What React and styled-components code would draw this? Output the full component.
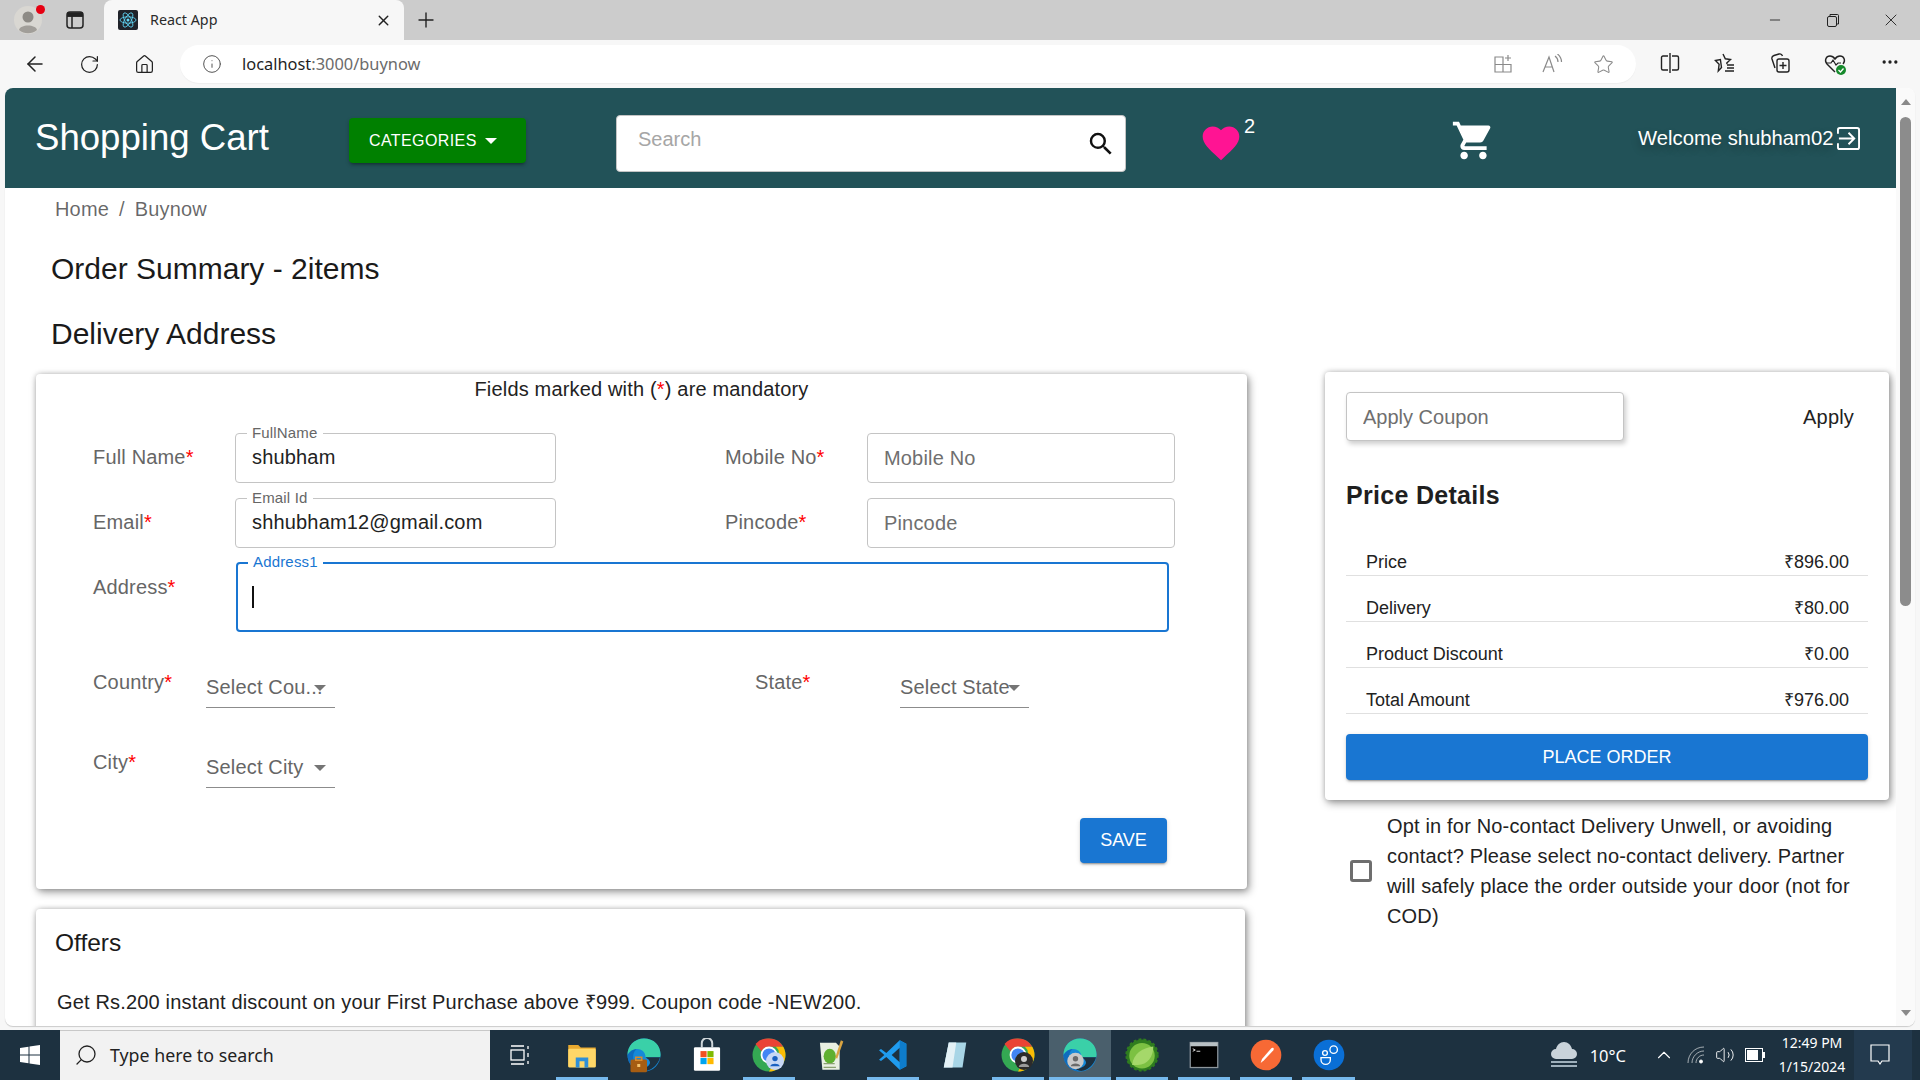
import React from 'react';
import styled, { createGlobalStyle } from 'styled-components';
import { ArrowLeft, RotateCw, Home, Info, Star, Plus, X, Minus, MoreHorizontal, ChevronUp, Volume2, Search } from 'lucide-react';
import { MdShoppingCart, MdFavorite, MdSearch } from 'react-icons/md';

const GlobalStyle = createGlobalStyle`
  html, body { margin: 0; padding: 0; height: 100%; overflow: hidden; }
  body { font-family: "Liberation Sans", Arial, sans-serif; letter-spacing: 0.17px; background: #f7f7f7; }
  * { box-sizing: border-box; }
`;

const Screen = styled.div`
  width: 1920px;
  height: 1080px;
  display: flex;
  flex-direction: column;
  overflow: hidden;
`;

/* browser chrome */
const TabStrip = styled.div`
  height: 40px;
  flex: none;
  background: #cccccc;
  display: flex;
  align-items: center;
  padding-left: 14px;
  letter-spacing: 0;
`;

const Avatar = styled.div`
  position: relative;
  width: 28px;
  height: 28px;
  flex: none;
  margin-right: 24px;
`;

const AvatarDot = styled.span`
  position: absolute;
  top: -1px;
  right: -3px;
  width: 9px;
  height: 9px;
  border-radius: 50%;
  background: #e60012;
`;

const TabActions = styled.div`
  width: 38px;
  flex: none;
  display: flex;
`;

const Tab = styled.div`
  width: 300px;
  height: 40px;
  flex: none;
  background: #f7f7f7;
  border-radius: 8px 8px 0 0;
  display: flex;
  align-items: center;
  padding: 0 12px 0 14px;
  font-family: "Noto Sans", sans-serif;
  font-size: 14.3px;
  color: #2b2b2b;
`;

const TabTitle = styled.span`
  margin: -2px 0 0 12px;
  flex: 1;
`;

const NewTab = styled.div`
  margin-left: 10px;
  display: flex;
  color: #222;
`;

const WindowButtons = styled.div`
  margin-left: auto;
  display: flex;
  align-items: center;
  color: #222;
`;

const WindowButton = styled.div`
  width: 58px;
  display: flex;
  justify-content: center;
`;

const Toolbar = styled.div`
  height: 48px;
  flex: none;
  background: #f7f7f7;
  display: flex;
  align-items: center;
  padding-left: 7px;
  letter-spacing: 0;
`;

const NavButton = styled.div`
  width: 55px;
  display: flex;
  justify-content: center;
  flex: none;
  color: #222;
`;

const AddressBar = styled.div`
  width: 1456px;
  height: 38px;
  margin-left: 8px;
  flex: none;
  background: #fff;
  border-radius: 19px;
  display: flex;
  align-items: center;
  padding: 0 8px 0 22px;
  box-shadow: 0 1px 1px rgba(0, 0, 0, 0.04);
`;

const Url = styled.div`
  margin: -2px 0 0 20px;
  font-family: "Noto Sans", sans-serif;
  font-size: 16.4px;
  color: #6b6b6b;
  flex: 1;
`;

const UrlHost = styled.span`
  color: #1f1f1f;
`;

const BarIcon = styled.div`
  width: 50px;
  display: flex;
  justify-content: center;
  color: #8a8a8a;
`;

const ToolIcons = styled.div`
  display: flex;
  margin-left: 6px;
`;

/* page viewport */
const Viewport = styled.div`
  flex: 1;
  min-height: 0;
  margin: 0 5px 4px 5px;
  background: #fff;
  border-radius: 8px;
  display: flex;
  overflow: hidden;
  box-shadow: 0 1px 1px rgba(0, 0, 0, 0.18);
`;

const Page = styled.div`
  flex: 1;
  min-width: 0;
  overflow: hidden;
`;

const Scrollbar = styled.div`
  width: 19px;
  flex: none;
  background: #fafafa;
  display: flex;
  flex-direction: column;
  align-items: center;
  padding: 11px 0 10px;
`;

const ScrollArrow = styled.div`
  width: 0;
  height: 0;
  border-left: 5px solid transparent;
  border-right: 5px solid transparent;
  ${(p) => (p.$down ? 'border-top: 6px solid #8a8a8a;' : 'border-bottom: 6px solid #8a8a8a;')}
`;

const ScrollThumb = styled.div`
  width: 11px;
  height: 489px;
  margin-top: 12px;
  background: #8c8c8c;
  border-radius: 6px;
`;

const ScrollGap = styled.div`
  flex: 1;
`;

/* shop header */
const Header = styled.header`
  height: 100px;
  background: #225258;
  display: flex;
  align-items: center;
  padding-left: 30px;
  color: #fff;
`;

const Brand = styled.div`
  width: 314px;
  flex: none;
  font-size: 36.6px;
  letter-spacing: 0;
`;

const CategoryButton = styled.button`
  width: 177px;
  height: 45px;
  margin-top: 5px;
  flex: none;
  border: 0;
  border-radius: 4px;
  background: #008000;
  color: #fff;
  font-family: inherit;
  font-size: 16px;
  letter-spacing: 0.4px;
  display: flex;
  align-items: center;
  padding-left: 20px;
  gap: 8px;
  box-shadow: 0 3px 3px -2px rgba(0, 0, 0, 0.3), 0 2px 4px rgba(0, 0, 0, 0.2);
`;

const DropTriangle = styled.span`
  width: 0;
  height: 0;
  border-left: 6px solid transparent;
  border-right: 6px solid transparent;
  border-top: 6px solid currentColor;
`;

const SearchBox = styled.div`
  width: 510px;
  height: 57px;
  margin: 11px 0 0 90px;
  flex: none;
  background: #fff;
  border: 1px solid #c4c4c4;
  border-radius: 4px;
  display: flex;
  align-items: center;
  padding: 0 9px 8px 21px;
  color: #111;
`;

const SearchInput = styled.input`
  flex: 1;
  min-width: 0;
  border: 0;
  outline: 0;
  font-family: inherit;
  font-size: 20px;
  padding: 0;
  &::placeholder { color: #a6a6a6; opacity: 1; }
`;

const SearchIconWrap = styled.div`
  display: flex;
  margin-top: 8px;
`;

const Wishlist = styled.div`
  position: relative;
  margin: 10px 0 0 71px;
  width: 48px;
  height: 48px;
  flex: none;
  color: #ff1493;
  display: flex;
  align-items: center;
  justify-content: center;
`;

const WishCount = styled.span`
  position: absolute;
  top: -4px;
  left: 47px;
  font-size: 20px;
  color: #fff;
`;

const CartLink = styled.div`
  margin: 4px 0 0 202px;
  width: 52px;
  flex: none;
  display: flex;
  justify-content: center;
`;

const Welcome = styled.div`
  margin-left: 139px;
  margin-top: 1px;
  font-size: 20.25px;
  letter-spacing: 0;
  display: flex;
  align-items: center;
  gap: 4px;
  white-space: nowrap;
  text-shadow: 0 4px 8px rgba(0, 0, 0, 0.3);
`;

/* body of the page */
const Crumbs = styled.nav`
  padding: 10px 0 0 50px;
  font-size: 20px;
  line-height: 23px;
  color: rgba(0, 0, 0, 0.6);
`;

const CrumbSep = styled.span`
  margin: 0 10px;
`;

const PageTitle = styled.h1`
  margin: ${(p) => p.$top}px 0 0 46px;
  font-size: 30px;
  font-weight: 400;
  line-height: 36px;
  letter-spacing: 0;
  color: #1a1a1a;
`;

const Columns = styled.div`
  display: flex;
  align-items: flex-start;
  gap: 78px;
  padding: 20px 0 0 31px;
`;

const LeftColumn = styled.div`
  width: 1211px;
  flex: none;
  margin-top: 2px;
`;

const RightColumn = styled.div`
  width: 564px;
  flex: none;
`;

const Card = styled.section`
  background: #fff;
  border-radius: 4px;
  box-shadow: 2px 3px 8px rgba(0, 0, 0, 0.4), 0 0 5px rgba(0, 0, 0, 0.18);
`;

const FormCard = styled(Card)`
  height: 515px;
  padding: 0 0 0 57px;
`;

const Note = styled.div`
  height: 28px;
  margin-left: -57px;
  text-align: center;
  font-size: 20px;
  line-height: 30px;
  color: #222;
`;

const Req = styled.span`
  color: #f00;
`;

const FieldRow = styled.div`
  display: flex;
  margin-top: ${(p) => p.$top}px;
`;

const FieldPair = styled.div`
  display: flex;
  align-items: center;
  flex: none;
  width: ${(p) => p.$width}px;
`;

const FieldLabel = styled.label`
  flex: none;
  width: 142px;
  margin-top: -2px;
  font-size: 20px;
  color: #666;
  white-space: nowrap;
`;

const Outlined = styled.div`
  position: relative;
  flex: none;
  width: ${(p) => p.$width}px;
  height: 50px;
`;

const TextInput = styled.input`
  width: 100%;
  height: 100%;
  border: 1px solid #c4c4c4;
  border-radius: 4px;
  outline: 0;
  background: #fff;
  padding: 0 16px 2px;
  font-family: inherit;
  font-size: 20px;
  letter-spacing: 0.17px;
  color: #222;
  &::placeholder { color: #6f6f6f; opacity: 1; }
  &:not([value]) { padding-bottom: 0; }
`;

const FloatLabel = styled.span`
  position: absolute;
  top: ${(p) => (p.$focused ? -11 : -9)}px;
  left: ${(p) => (p.$focused ? 10 : 12)}px;
  padding: 0 5px;
  background: #fff;
  font-size: 15px;
  line-height: 17px;
  color: ${(p) => (p.$focused ? '#1976d2' : '#666')};
`;

const AddressLabel = styled(FieldLabel)`
  align-self: flex-start;
  margin-top: 14px;
`;

const FocusedField = styled.div`
  position: relative;
  width: 933px;
  height: 70px;
  margin-left: 1px;
  flex: none;
  border: 2px solid #1976d2;
  border-radius: 4px;
  display: flex;
  align-items: center;
  padding: 0 14px;
`;

const Caret = styled.span`
  width: 2px;
  height: 22px;
  background: #111;
`;

const SelectRow = styled.div`
  display: flex;
  margin-top: ${(p) => p.$top}px;
  height: 38px;
`;

const SelectLabel = styled.div`
  flex: none;
  width: ${(p) => p.$width}px;
  font-size: 20px;
  line-height: 23px;
  margin-top: 1px;
  color: #666;
`;

const SelectBox = styled.div`
  position: relative;
  flex: none;
  width: 129px;
  height: 38px;
  border-bottom: 1px solid #8c8c8c;
  padding-top: 6px;
  font-size: 20px;
  line-height: 23px;
  color: #666;
  white-space: nowrap;
`;

const SelectArrow = styled.span`
  position: absolute;
  top: 15px;
  right: 9px;
  width: 0;
  height: 0;
  border-left: 6px solid transparent;
  border-right: 6px solid transparent;
  border-top: 6px solid #757575;
`;

const SelectSpacer = styled.div`
  flex: none;
  width: 420px;
`;

const SaveRow = styled.div`
  display: flex;
  justify-content: flex-end;
  margin-top: 30px;
  padding-right: 80px;
`;

const BlueButton = styled.button`
  height: ${(p) => p.$height}px;
  width: ${(p) => p.$width};
  border: 0;
  border-radius: 4px;
  background: #1976d2;
  color: #fff;
  font-family: inherit;
  font-size: 18px;
  box-shadow: 0 3px 1px -2px rgba(0, 0, 0, 0.2), 0 2px 2px rgba(0, 0, 0, 0.14), 0 1px 5px rgba(0, 0, 0, 0.12);
`;

const OffersCard = styled(Card)`
  margin-top: 20px;
  width: 1209px;
  height: 220px;
  padding: 19px 19px;
`;

const OffersTitle = styled.h2`
  margin: 0;
  font-size: 24.5px;
  font-weight: 400;
  line-height: 30px;
  letter-spacing: 0;
  color: #1a1a1a;
`;

const OffersText = styled.p`
  margin: 32px 0 0 2px;
  font-size: 20px;
  line-height: 24px;
  color: #222;
`;

const PriceCard = styled(Card)`
  height: 428px;
  padding: 20px 21px;
`;

const CouponRow = styled.div`
  display: flex;
  align-items: center;
  justify-content: space-between;
  padding-right: 14px;
`;

const CouponInput = styled.input`
  width: 278px;
  height: 49px;
  border: 1px solid #c4c4c4;
  border-radius: 4px;
  outline: 0;
  padding: 2px 16px 0;
  font-family: inherit;
  font-size: 20px;
  box-shadow: 2px 3px 5px rgba(0, 0, 0, 0.2);
  &::placeholder { color: #6f6f6f; opacity: 1; }
`;

const ApplyText = styled.span`
  margin-top: 2px;
  font-size: 20px;
  color: #222;
`;

const PriceHeading = styled.h3`
  margin: 40px 0 21px;
  font-size: 25px;
  font-weight: 700;
  line-height: 28px;
  letter-spacing: 0.3px;
  color: #1f1f1f;
`;

const PriceRow = styled.div`
  height: 46px;
  display: flex;
  align-items: flex-end;
  justify-content: space-between;
  padding: 0 19px 2px 20px;
  border-bottom: 1px solid #e0e0e0;
  font-size: 18px;
  line-height: 21px;
  letter-spacing: -0.02px;
  color: #222;
`;

const PlaceOrderWrap = styled.div`
  margin-top: 20px;
`;

const OptIn = styled.div`
  display: flex;
  align-items: center;
  gap: 15px;
  margin-top: 11px;
  padding-left: 25px;
`;

const CheckSquare = styled.span`
  width: 22px;
  height: 22px;
  flex: none;
  border: 3px solid #6e6e6e;
  border-radius: 3px;
`;

const OptText = styled.p`
  margin: 0;
  width: 475px;
  font-size: 20px;
  line-height: 30px;
  color: #222;
`;

/* windows taskbar */
const Taskbar = styled.footer`
  height: 50px;
  flex: none;
  background: #1d3140;
  display: flex;
  align-items: stretch;
  color: #fff;
  letter-spacing: 0;
`;

const StartButton = styled.div`
  width: 60px;
  flex: none;
  display: flex;
  align-items: center;
  justify-content: center;
`;

const TaskSearch = styled.div`
  width: 430px;
  flex: none;
  background: #f2f2f2;
  border-top: 1px solid #c8c8c8;
  display: flex;
  align-items: center;
  gap: 12px;
  padding: 0 0 2px 14px;
  font-family: "Noto Sans", sans-serif;
  font-size: 17.8px;
  color: #222;
`;

const MirroredSearch = styled(Search)`
  transform: scaleX(-1);
`;

const TaskIcons = styled.div`
  display: flex;
  margin-left: -1px;
`;

const TaskIcon = styled.div`
  position: relative;
  width: 62.2px;
  flex: none;
  display: flex;
  align-items: center;
  justify-content: center;
  background: ${(p) => (p.$active ? '#4a5f6c' : 'transparent')};
  ${(p) => p.$open && `
    &::after {
      content: "";
      position: absolute;
      left: ${p.$active ? 0 : 5}px;
      right: ${p.$active ? 0 : 5}px;
      bottom: 0;
      height: 3px;
      background: #76b9ed;
    }
  `}
`;

const Tray = styled.div`
  margin-left: auto;
  display: flex;
  align-items: center;
`;

const TrayItem = styled.div`
  width: ${(p) => p.$width}px;
  display: flex;
  align-items: center;
  justify-content: center;
`;

const Temperature = styled.span`
  font-family: "Noto Sans", sans-serif;
  font-size: 16.5px;
  margin: 0 20px 0 11px;
`;

const Clock = styled.div`
  width: 84px;
  text-align: center;
  font-family: "Noto Sans", sans-serif;
  font-size: 14px;
  line-height: 24px;
`;

const NotifyButton = styled.div`
  width: 58px;
  height: 50px;
  margin-right: 8px;
  padding-right: 6px;
  background: #233a4e;
  display: flex;
  align-items: center;
  justify-content: center;
`;

const ChromeLogo = ({ badge }) => (
  <svg width="36" height="36" viewBox="0 0 24 24">
    <circle cx="12" cy="12" r="11" fill="#34a853" />
    <path d="M12 1a11 11 0 0 1 9.500 5.500H12a5.500 5.500 0 0 0-5 3L3 4.600A11 11 0 0 1 12 1z" fill="#ea4335" />
    <path d="M21.500 6.500A11 11 0 0 1 12 23l4.600-8a5.500 5.500 0 0 0 0-8.500z" fill="#fbbc05" />
    <circle cx="12" cy="12" r="5.600" fill="#fff" />
    <circle cx="12" cy="12" r="4.400" fill="#4285f4" />
    {badge === 'user' && (
      <g>
        <circle cx="16" cy="16" r="6" fill="#c7d7f5" />
        <circle cx="16" cy="14.400" r="1.800" fill="#1a5fc0" />
        <path d="M12.800 19.500c.4-2.200 6-2.200 6.400 0z" fill="#1a5fc0" />
      </g>
    )}
    {badge === 'photo' && (
      <g>
        <circle cx="16" cy="16" r="6" fill="#2b2b2b" />
        <circle cx="16" cy="14.600" r="2" fill="#cfcfcf" />
        <path d="M12.500 20c.4-2.800 6.600-2.800 7 0z" fill="#9a9a9a" />
      </g>
    )}
  </svg>
);

const EdgeLogo = ({ badge }) => (
  <svg width="36" height="36" viewBox="0 0 24 24">
    <circle cx="12" cy="12" r="11" fill="#1689d8" />
    <path d="M1 12C1 5.500 6 1 12 1c6.500 0 11 4.500 11 10.500 0 1-.1 1.500-.3 2H13c0-3-2-5.500-5.500-5.500C5 8 2.500 9.500 1 12z" fill="#3ad0a8" />
    <path d="M13 13.500h9.700C21.600 18 18 21.500 14 22.500c-2 .3-4-.2-5-1.500 3 .5 7-1.500 7-4 0-1.500-1.500-2.500-3-3.500z" fill="#1d3140" />
    <path d="M12 23C6 23 1 18 1 12c1.500-2.500 4-4 6-4-2 2-2.500 4-2 7 .6 3.800 4 7.500 7 8z" fill="#0f6cbd" />
    {badge === 'case' && (
      <g>
        <rect x="3" y="15" width="11" height="8.500" rx="1" fill="#a65d12" />
        <rect x="6.500" y="13.500" width="4" height="2" fill="none" stroke="#d98a2b" />
        <rect x="7.500" y="18" width="2" height="2" fill="#f5c26b" />
      </g>
    )}
    {badge === 'user' && (
      <g>
        <circle cx="9" cy="16" r="5.500" fill="#c9c9c9" />
        <circle cx="9" cy="14.500" r="1.800" fill="#6a6a6a" />
        <path d="M5.800 19.500c.4-2.400 6-2.400 6.400 0z" fill="#6a6a6a" />
      </g>
    )}
  </svg>
);

const TaskViewIcon = () => (
  <svg width="24" height="24" viewBox="0 0 24 24" fill="none" stroke="#fff" strokeWidth="1.300">
    <rect x="3" y="7" width="13" height="10" />
    <path d="M3 3h13M3 21h13M20 3v3M20 10v4M20 18v3" />
  </svg>
);

const ExplorerIcon = () => (
  <svg width="30" height="30" viewBox="0 0 24 24">
    <path d="M1 4h8l2 2h12v15H1z" fill="#e8a92f" />
    <rect x="1" y="7" width="22" height="15" rx="1" fill="#ffd768" />
    <rect x="7" y="14" width="10" height="8" fill="#2f8fd8" />
    <rect x="10" y="17" width="4" height="5" fill="#ffd768" />
  </svg>
);

const StoreIcon = () => (
  <svg width="32" height="34" viewBox="0 0 24 26">
    <path d="M8 7V4a4 4 0 0 1 8 0v3" fill="none" stroke="#cfd6da" strokeWidth="1.500" />
    <rect x="2" y="7" width="20" height="18" rx="1" fill="#fff" />
    <rect x="7" y="10" width="4.700" height="4.700" fill="#f25022" />
    <rect x="12.300" y="10" width="4.700" height="4.700" fill="#7fba00" />
    <rect x="7" y="15.300" width="4.700" height="4.700" fill="#00a4ef" />
    <rect x="12.300" y="15.300" width="4.700" height="4.700" fill="#ffb900" />
  </svg>
);

const NotepadIcon = () => (
  <svg width="30" height="32" viewBox="0 0 24 26">
    <path d="M3 3h13l3 3v19H5z" fill="#e9efe1" />
    <ellipse cx="11" cy="14" rx="5" ry="6" fill="#5fb030" />
    <path d="M6 20h9M6 23h10" stroke="#8aa070" />
    <path d="M20 1l2 1-5 14-1.500-1z" fill="#d9a441" />
  </svg>
);

const VscodeIcon = () => (
  <svg width="32" height="32" viewBox="0 0 24 24">
    <path d="M17 1l5 2.500v17L17 23 7 13.500 3 16.500 1.500 15.500 5.500 12l-4-3.500L3 7.500l4 3z" fill="#1f9cf0" />
    <path d="M17 6.500 11 12l6 5.500z" fill="#1d3140" />
    <path d="M17 1l5 2.500v17L17 23z" fill="#0e7ccb" />
  </svg>
);

const NotebookIcon = () => (
  <svg width="30" height="30" viewBox="0 0 24 24">
    <path d="M7 2h14l-3 20H3z" fill="#a8d5e6" />
    <path d="M7 2h6l-3 20H3z" fill="#e4f1f6" />
  </svg>
);

const SpringIcon = () => (
  <svg width="34" height="34" viewBox="0 0 24 24">
    <circle cx="12" cy="12" r="11" fill="#2f7d1f" strokeDasharray="2 1.500" stroke="#2f7d1f" strokeWidth="1.500" />
    <circle cx="12" cy="12.500" r="9" fill="#7cc142" />
    <path d="M5 19C6 11 12 7 20 6c0 7-4 13-11 13-1 0-2 .3-4 0z" fill="#a5d86a" />
  </svg>
);

const TerminalIcon = () => (
  <svg width="30" height="30" viewBox="0 0 24 24">
    <rect x="1" y="2" width="22" height="20" fill="#000" stroke="#8d969c" />
    <rect x="1" y="2" width="22" height="3" fill="#b8c0c4" />
    <path d="M3 7l2 1-2 1M6 9h3" stroke="#d8d8d8" strokeWidth=".8" fill="none" />
  </svg>
);

const PostmanIcon = () => (
  <svg width="32" height="32" viewBox="0 0 24 24">
    <circle cx="12" cy="12" r="11.500" fill="#f76935" />
    <path d="M8 18l1-3 7-8c1-1 2.500 0 1.500 1.500L10.500 16z" fill="#fff" />
  </svg>
);

const DbIcon = () => (
  <svg width="32" height="32" viewBox="0 0 24 24">
    <circle cx="12" cy="12" r="11.500" fill="#0a6fd6" />
    <circle cx="15.500" cy="8" r="2.800" fill="none" stroke="#fff" />
    <circle cx="9" cy="10.500" r="1.800" fill="none" stroke="#fff" />
    <path d="M6 14h7v1.500a3.500 3.500 0 0 1-7 0z" fill="none" stroke="#fff" />
  </svg>
);

const WindowsLogo = () => (
  <svg width="20" height="20" viewBox="0 0 20 20" fill="#fff">
    <path d="M0 3l8.500-1.200v7.700H0zM9.500 1.600 20 0v9.500H9.500zM0 10.500h8.500v7.700L0 17zM9.500 10.500H20V20L9.500 18.400z" />
  </svg>
);

const ReactFavicon = () => (
  <svg width="20" height="20" viewBox="0 0 20 20">
    <rect width="20" height="20" rx="2" fill="#20232a" />
    <g fill="none" stroke="#61dafb" strokeWidth=".8">
      <ellipse cx="10" cy="10" rx="8" ry="3.200" />
      <ellipse cx="10" cy="10" rx="8" ry="3.200" transform="rotate(60 10 10)" />
      <ellipse cx="10" cy="10" rx="8" ry="3.200" transform="rotate(120 10 10)" />
    </g>
    <circle cx="10" cy="10" r="1.500" fill="#61dafb" />
  </svg>
);

const ProfileIcon = () => (
  <svg width="28" height="28" viewBox="0 0 28 28">
    <circle cx="14" cy="14" r="14" fill="#d9d7d2" />
    <circle cx="14" cy="11" r="5.500" fill="#8d8a85" />
    <path d="M5 24c1-6 17-6 18 0a14 14 0 0 1-18 0z" fill="#a19e99" />
  </svg>
);

const TabsIcon = () => (
  <svg width="18" height="18" viewBox="0 0 18 18" fill="none" stroke="#222" strokeWidth="1.500">
    <rect x="1" y="1" width="16" height="16" rx="3" />
    <path d="M1 5h16M6 5v12" />
    <path d="M2 2h14v3H2z" fill="#222" />
  </svg>
);

const AddAppIcon = () => (
  <svg width="20" height="20" viewBox="0 0 20 20" fill="none" stroke="#8a8a8a" strokeWidth="1.200">
    <path d="M2 3h8v15H2zM10 3v15M2 10.500h16V18h-8M15 1v6M12 4h6" />
  </svg>
);

const ReadAloudIcon = () => (
  <svg width="22" height="20" viewBox="0 0 22 20" fill="none" stroke="#8a8a8a" strokeWidth="1.200">
    <path d="M1 18 7 3l5 15M3 13h7M13 2c2 1.500 3 3.500 3 6M15.500 0c2.500 2 4 4.500 4 8" />
  </svg>
);

const SplitIcon = () => (
  <svg width="20" height="22" viewBox="0 0 20 22" fill="none" stroke="#222" strokeWidth="1.400">
    <path d="M8 4H3a1.500 1.500 0 0 0-1.500 1.500v11A1.500 1.500 0 0 0 3 18h5M12 4h5a1.500 1.500 0 0 1 1.500 1.500v11A1.500 1.500 0 0 1 17 18h-5M10 1v20" />
  </svg>
);

const FavListIcon = () => (
  <svg width="22" height="22" viewBox="0 0 22 22" fill="none" stroke="#222" strokeWidth="1.400">
    <path d="M9 2l2.300 4.800 5.200.7-3.700 3.600.2 1M7.500 15.500 4.300 19l.8-6.700L1.400 8.500l5-1z" />
    <path d="M13 13h7M13 16h7M11 19h9" />
  </svg>
);

const CollectionsIcon = () => (
  <svg width="22" height="22" viewBox="0 0 22 22" fill="none" stroke="#222" strokeWidth="1.400">
    <path d="M6 16 3 7c-.4-1.500.5-3 2-3.500L10 2c1.500-.4 3 .4 3.500 2" />
    <rect x="8" y="7" width="12" height="13" rx="2" />
    <path d="M14 10v7M10.500 13.500h7" />
  </svg>
);

const HealthIcon = () => (
  <svg width="24" height="24" viewBox="0 0 24 24">
    <path d="M12 20 4 12C1 8.500 3 4 7 4c2.500 0 4 1.500 5 3 1-1.500 2.500-3 5-3 4 0 6 4.500 3 8" fill="none" stroke="#222" strokeWidth="1.400" />
    <path d="M4 11h4l2-3 3 5 2-2h3" fill="none" stroke="#222" strokeWidth="1.200" />
    <circle cx="18" cy="18" r="5" fill="#168a2c" />
    <path d="M15.500 18l2 2 3-3.500" fill="none" stroke="#fff" strokeWidth="1.300" />
  </svg>
);

const ExitIcon = () => (
  <svg width="23" height="23" viewBox="0 0 24 24" fill="none" stroke="#fff" strokeWidth="2">
    <path d="M1 7V3a2 2 0 0 1 2-2h18a2 2 0 0 1 2 2v18a2 2 0 0 1-2 2H3a2 2 0 0 1-2-2v-4" />
    <path d="M2 12h15M12 6l6 6-6 6" />
  </svg>
);

const CloudIcon = () => (
  <svg width="30" height="30" viewBox="0 0 30 30">
    <path d="M7 19a5 5 0 0 1 0-10c1-4 4-7 8-7s7 3 8 7a5 5 0 0 1 0 10z" fill="#c9d3da" />
    <path d="M2 22h26M2 26h26" stroke="#9eb0bc" strokeWidth="2" />
  </svg>
);

const WifiIcon = () => (
  <svg width="20" height="20" viewBox="0 0 20 20" fill="none" stroke="#fff">
    <path d="M2 18C2 9 9 2 18 2M6 18c0-6.500 5.500-12 12-12M10 18c0-4.500 3.500-8 8-8" opacity=".6" />
    <circle cx="15" cy="16.500" r="1.500" fill="#fff" />
  </svg>
);

const BatteryIcon = () => (
  <svg width="20" height="14" viewBox="0 0 20 14">
    <rect x=".5" y=".5" width="17" height="13" fill="none" stroke="#fff" />
    <rect x="2" y="2" width="11" height="10" fill="#fff" />
    <rect x="18" y="4" width="2" height="6" fill="#fff" />
  </svg>
);

const NotifyIcon = () => (
  <svg width="20" height="22" viewBox="0 0 20 22" fill="none" stroke="#fff" strokeWidth="1.200">
    <path d="M1 1h18v16h-7l-2 3-2-3H1z" />
  </svg>
);

const priceRows = [
  ['Price', '₹896.00'],
  ['Delivery', '₹80.00'],
  ['Product Discount', '₹0.00'],
  ['Total Amount', '₹976.00'],
];

const taskApps = [
  { key: 'view', node: <TaskViewIcon /> },
  { key: 'files', node: <ExplorerIcon />, open: true },
  { key: 'edge-work', node: <EdgeLogo badge="case" /> },
  { key: 'store', node: <StoreIcon /> },
  { key: 'chrome', node: <ChromeLogo badge="user" />, open: true },
  { key: 'notepad', node: <NotepadIcon /> },
  { key: 'code', node: <VscodeIcon />, open: true },
  { key: 'notebook', node: <NotebookIcon /> },
  { key: 'chrome-2', node: <ChromeLogo badge="photo" />, open: true },
  { key: 'edge', node: <EdgeLogo badge="user" />, open: true, active: true },
  { key: 'spring', node: <SpringIcon />, open: true },
  { key: 'terminal', node: <TerminalIcon />, open: true },
  { key: 'postman', node: <PostmanIcon />, open: true },
  { key: 'db', node: <DbIcon />, open: true },
];

const Required = () => <Req>*</Req>;

const App = () => (
  <Screen>
    <GlobalStyle />
    <TabStrip>
      <Avatar>
        <ProfileIcon />
        <AvatarDot />
      </Avatar>
      <TabActions><TabsIcon /></TabActions>
      <Tab>
        <ReactFavicon />
        <TabTitle>React App</TabTitle>
        <X size={17} color="#222" />
      </Tab>
      <NewTab><Plus size={24} strokeWidth={1.4} /></NewTab>
      <WindowButtons>
        <WindowButton><Minus size={16} strokeWidth={1.3} /></WindowButton>
        <WindowButton>
          <svg width="14" height="14" viewBox="0 0 14 14" fill="none" stroke="#222">
            <rect x="1.500" y="3.500" width="9" height="10" rx="1.500" />
            <path d="M4 3V1.500h7.500a1 1 0 0 1 1 1V11H11" />
          </svg>
        </WindowButton>
        <WindowButton><X size={20} strokeWidth={1.1} /></WindowButton>
      </WindowButtons>
    </TabStrip>

    <Toolbar>
      <NavButton><ArrowLeft size={24} strokeWidth={1.5} /></NavButton>
      <NavButton><RotateCw size={21} strokeWidth={1.4} /></NavButton>
      <NavButton><Home size={21} strokeWidth={1.4} /></NavButton>
      <AddressBar>
        <Info size={20} strokeWidth={1.2} color="#555" />
        <Url><UrlHost>localhost</UrlHost>:3000/buynow</Url>
        <BarIcon><AddAppIcon /></BarIcon>
        <BarIcon><ReadAloudIcon /></BarIcon>
        <BarIcon><Star size={21} strokeWidth={1.2} /></BarIcon>
      </AddressBar>
      <ToolIcons>
        <NavButton><SplitIcon /></NavButton>
        <NavButton><FavListIcon /></NavButton>
        <NavButton><CollectionsIcon /></NavButton>
        <NavButton><HealthIcon /></NavButton>
        <NavButton><MoreHorizontal size={20} /></NavButton>
      </ToolIcons>
    </Toolbar>

    <Viewport>
      <Page>
        <Header>
          <Brand>Shopping Cart</Brand>
          <CategoryButton>CATEGORIES<DropTriangle /></CategoryButton>
          <SearchBox>
            <SearchInput placeholder="Search" readOnly />
            <SearchIconWrap><MdSearch size={30} /></SearchIconWrap>
          </SearchBox>
          <Wishlist>
            <MdFavorite size={44} />
            <WishCount>2</WishCount>
          </Wishlist>
          <CartLink><MdShoppingCart size={45} /></CartLink>
          <Welcome>Welcome shubham02<ExitIcon /></Welcome>
        </Header>

        <Crumbs>Home<CrumbSep>/</CrumbSep>Buynow</Crumbs>
        <PageTitle $top={30}>Order Summary - 2items</PageTitle>
        <PageTitle $top={29}>Delivery Address</PageTitle>

        <Columns>
          <LeftColumn>
            <FormCard>
              <Note>Fields marked with (<Required />) are mandatory</Note>
              <FieldRow $top={31}>
                <FieldPair $width={632}>
                  <FieldLabel>Full Name<Required /></FieldLabel>
                  <Outlined $width={321}>
                    <TextInput value="shubham" readOnly />
                    <FloatLabel>FullName</FloatLabel>
                  </Outlined>
                </FieldPair>
                <FieldPair $width={450}>
                  <FieldLabel>Mobile No<Required /></FieldLabel>
                  <Outlined $width={308}>
                    <TextInput placeholder="Mobile No" readOnly />
                  </Outlined>
                </FieldPair>
              </FieldRow>
              <FieldRow $top={15}>
                <FieldPair $width={632}>
                  <FieldLabel>Email<Required /></FieldLabel>
                  <Outlined $width={321}>
                    <TextInput value="shhubham12@gmail.com" readOnly />
                    <FloatLabel>Email Id</FloatLabel>
                  </Outlined>
                </FieldPair>
                <FieldPair $width={450}>
                  <FieldLabel>Pincode<Required /></FieldLabel>
                  <Outlined $width={308}>
                    <TextInput placeholder="Pincode" readOnly />
                  </Outlined>
                </FieldPair>
              </FieldRow>
              <FieldRow $top={14}>
                <AddressLabel>Address<Required /></AddressLabel>
                <FocusedField>
                  <Caret />
                  <FloatLabel $focused>Address1</FloatLabel>
                </FocusedField>
              </FieldRow>
              <SelectRow $top={38}>
                <SelectLabel $width={113}>Country<Required /></SelectLabel>
                <SelectBox>
                  Select Cou...
                  <SelectArrow />
                </SelectBox>
                <SelectSpacer />
                <SelectLabel $width={145}>State<Required /></SelectLabel>
                <SelectBox>
                  Select State
                  <SelectArrow />
                </SelectBox>
              </SelectRow>
              <SelectRow $top={42}>
                <SelectLabel $width={113}>City<Required /></SelectLabel>
                <SelectBox>
                  Select City
                  <SelectArrow />
                </SelectBox>
              </SelectRow>
              <SaveRow>
                <BlueButton $height={45} $width="87px">SAVE</BlueButton>
              </SaveRow>
            </FormCard>

            <OffersCard>
              <OffersTitle>Offers</OffersTitle>
              <OffersText>Get Rs.200 instant discount on your First Purchase above ₹999. Coupon code -NEW200.</OffersText>
            </OffersCard>
          </LeftColumn>

          <RightColumn>
            <PriceCard>
              <CouponRow>
                <CouponInput placeholder="Apply Coupon" readOnly />
                <ApplyText>Apply</ApplyText>
              </CouponRow>
              <PriceHeading>Price Details</PriceHeading>
              {priceRows.map(([name, amount]) => (
                <PriceRow key={name}>
                  <span>{name}</span>
                  <span>{amount}</span>
                </PriceRow>
              ))}
              <PlaceOrderWrap>
                <BlueButton $height={46} $width="100%">PLACE ORDER</BlueButton>
              </PlaceOrderWrap>
            </PriceCard>
            <OptIn>
              <CheckSquare />
              <OptText>Opt in for No-contact Delivery Unwell, or avoiding contact? Please select no-contact delivery. Partner will safely place the order outside your door (not for COD)</OptText>
            </OptIn>
          </RightColumn>
        </Columns>
      </Page>
      <Scrollbar>
        <ScrollArrow />
        <ScrollThumb />
        <ScrollGap />
        <ScrollArrow $down />
      </Scrollbar>
    </Viewport>

    <Taskbar>
      <StartButton><WindowsLogo /></StartButton>
      <TaskSearch>
        <MirroredSearch size={24} strokeWidth={1.3} />
        <span>Type here to search</span>
      </TaskSearch>
      <TaskIcons>
        {taskApps.map((app) => (
          <TaskIcon key={app.key} $open={app.open} $active={app.active}>{app.node}</TaskIcon>
        ))}
      </TaskIcons>
      <Tray>
        <CloudIcon />
        <Temperature>10°C</Temperature>
        <TrayItem $width={36}><ChevronUp size={22} strokeWidth={1.2} /></TrayItem>
        <TrayItem $width={28}><WifiIcon /></TrayItem>
        <TrayItem $width={30}><Volume2 size={20} strokeWidth={1.1} /></TrayItem>
        <TrayItem $width={30}><BatteryIcon /></TrayItem>
        <Clock>12:49 PM<br />1/15/2024</Clock>
        <NotifyButton><NotifyIcon /></NotifyButton>
      </Tray>
    </Taskbar>
  </Screen>
);

export default App;
